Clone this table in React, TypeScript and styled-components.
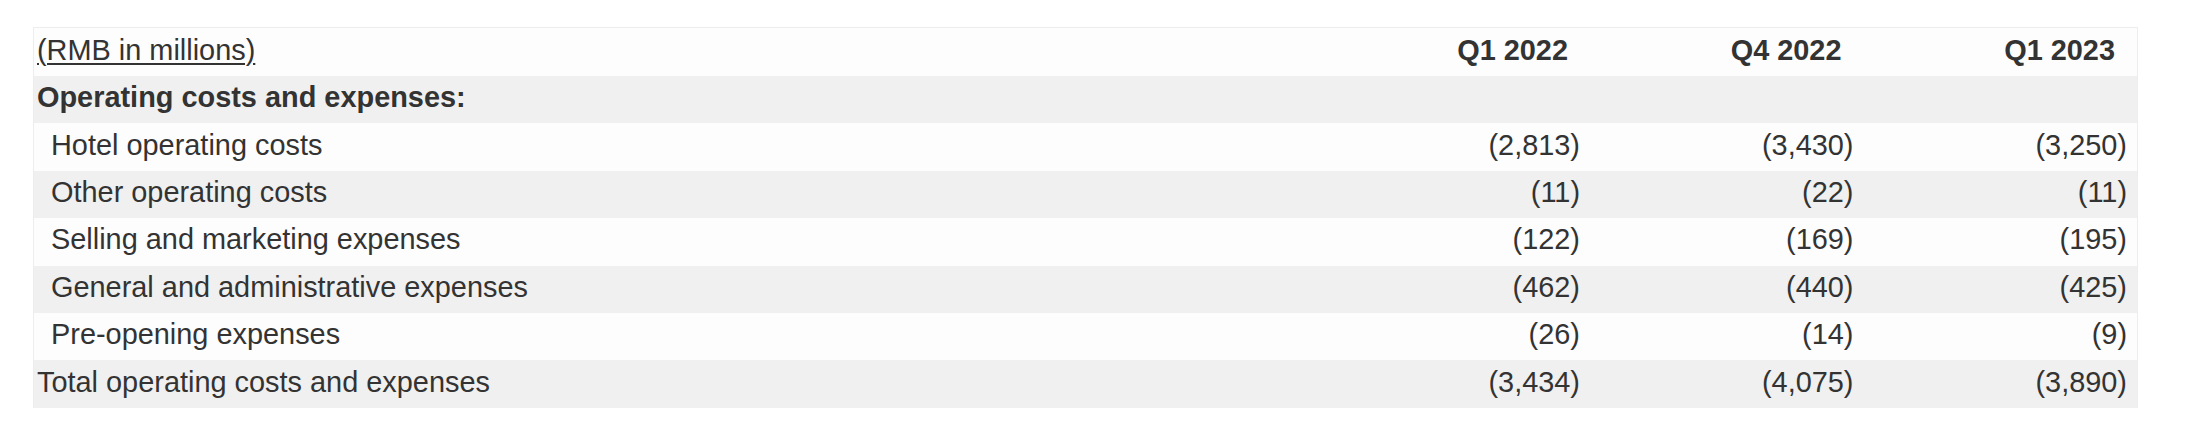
import React from "react";
import styled, { createGlobalStyle } from "styled-components";

const GlobalStyle = createGlobalStyle`
  html, body {
    margin: 0;
    padding: 0;
    background: #ffffff;
  }
  body {
    font-family: "Liberation Sans", Arial, Helvetica, sans-serif;
    color: #333333;
  }
`;

const Page = styled.div`
  padding: 27px 0 0 33px;
`;

const Table = styled.div`
  width: 2105px;
  box-sizing: border-box;
  border: 1px solid #ededed;
  border-bottom: none;
  font-size: 28.9px;
`;

const Row = styled.div<{ $shade: boolean; $head?: boolean }>`
  display: grid;
  grid-template-columns: 1fr repeat(3, 273.5px);
  align-items: center;
  height: ${(p) => (p.$head ? "48px" : "47.4px")};
  background: ${(p) => (p.$shade ? "#f0f0f0" : "#fdfdfd")};
`;

const Cell = styled.div`
  padding-bottom: 4px;
  white-space: nowrap;
`;

const Label = styled(Cell)<{ $indent?: boolean; $bold?: boolean }>`
  padding-left: ${(p) => (p.$indent ? "17px" : "3px")};
  font-weight: ${(p) => (p.$bold ? 700 : 400)};
`;

const Units = styled.span`
  text-decoration: underline;
  text-underline-offset: 3px;
  text-decoration-thickness: 2px;
`;

const HeadCell = styled(Cell)`
  text-align: right;
  padding-right: 22px;
  font-weight: 700;
`;

const Num = styled(Cell)`
  text-align: right;
  padding-right: 10px;
`;

type Line = {
  label: string;
  values: string[];
  indent?: boolean;
  bold?: boolean;
};

const lines: Line[] = [
  { label: "Operating costs and expenses:", values: ["", "", ""], bold: true },
  { label: "Hotel operating costs", values: ["(2,813)", "(3,430)", "(3,250)"], indent: true },
  { label: "Other operating costs", values: ["(11)", "(22)", "(11)"], indent: true },
  { label: "Selling and marketing expenses", values: ["(122)", "(169)", "(195)"], indent: true },
  { label: "General and administrative expenses", values: ["(462)", "(440)", "(425)"], indent: true },
  { label: "Pre-opening expenses", values: ["(26)", "(14)", "(9)"], indent: true },
  { label: "Total operating costs and expenses", values: ["(3,434)", "(4,075)", "(3,890)"] },
];

const quarters = ["Q1 2022", "Q4 2022", "Q1 2023"];

export default function App() {
  return (
    <>
      <GlobalStyle />
      <Page>
        <Table>
          <Row $shade={false} $head>
            <Label>
              <Units>(RMB in millions)</Units>
            </Label>
            {quarters.map((q) => (
              <HeadCell key={q}>{q}</HeadCell>
            ))}
          </Row>
          {lines.map((l, i) => (
            <Row key={l.label} $shade={i % 2 === 0}>
              <Label $indent={l.indent} $bold={l.bold}>
                {l.label}
              </Label>
              {l.values.map((v, j) => (
                <Num key={j}>{v}</Num>
              ))}
            </Row>
          ))}
        </Table>
      </Page>
    </>
  );
}
